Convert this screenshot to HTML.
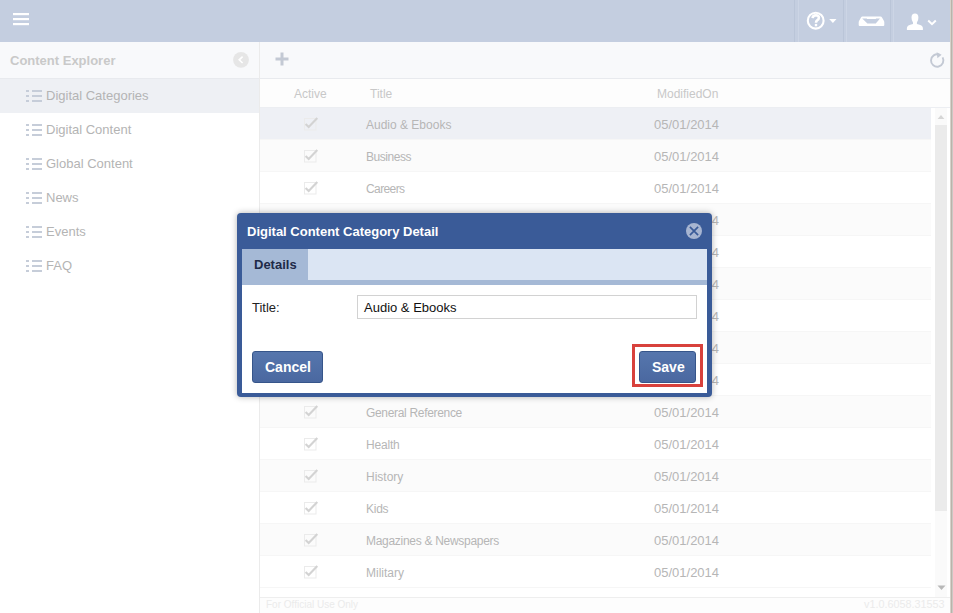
<!DOCTYPE html>
<html><head><meta charset="utf-8">
<style>
*{margin:0;padding:0;box-sizing:border-box}
html,body{width:953px;height:613px;overflow:hidden;background:#fff;font-family:"Liberation Sans",sans-serif;position:relative}
.abs{position:absolute}
#hdr{left:0;top:0;width:953px;height:42px;background:#c4cee0}
.hdiv{top:0;width:1px;height:42px;background:#bac5d8}
.hdiv2{top:0;width:1px;height:42px;background:#ccd5e5}
#side{left:0;top:42px;width:259px;height:571px;background:#fff}
#sidehd{left:0;top:42px;width:259px;height:37px;background:#f8f9fb;border-bottom:1px solid #e8eaee}
#sidehd span{position:absolute;left:10px;top:11px;font-size:13px;font-weight:bold;color:#c9c9c9}
.sitem{left:0;width:259px;height:34px}
.sitem .t{position:absolute;left:46px;top:10px;font-size:13px;color:#b4b4b4}
.sitem svg{position:absolute;left:25px;top:12px}
#sel svg{top:11px}
#sel .t{top:9px}
#vline{left:259px;top:42px;width:1px;height:571px;background:#ebebeb}
#tool{left:260px;top:42px;width:690px;height:37px;background:#f8f9fb;border-bottom:1px solid #e8eaee}
#thead{left:260px;top:79px;width:690px;height:29px;background:#fdfdfd;border-bottom:1px solid #eceef2}
#thead span{position:absolute;top:8px;font-size:12px;color:#c8c8c8}
.row{left:260px;width:671px;height:32px;border-bottom:1px solid #f6f6f6}
.row .c{position:absolute;left:44px;top:9px}
.row .ti{position:absolute;left:106px;top:10px;font-size:12px;color:#b6b6b6}
.row .dt{position:absolute;left:394px;top:9px;font-size:13px;color:#b6b6b6}
#sbar{left:935px;top:108px;width:12px;height:489px;background:#fafafa}
#thumb{left:935px;top:125px;width:12px;height:386px;background:#ebebeb}
#redge{left:950px;top:0;width:3px;height:613px;background:linear-gradient(90deg,#d6d2cb 0,#d6d2cb 1px,#bab3aa 1px,#bab3aa 2px,#ccc8c4 2px)}
#wgap{left:947px;top:108px;width:3px;height:489px;background:#fff}
#foot{left:260px;top:597px;width:690px;height:16px;background:#fdfdfd;border-top:1px solid #eeeeee}
#foot span{position:absolute;top:1px;font-size:10px;color:#ebebeb}
#modal{left:237px;top:213px;width:475px;height:184px;background:#3a5b98;border-radius:4px;box-shadow:0 0 6px rgba(0,0,0,0.3)}
#mtitle{left:10px;top:10.5px;font-size:13px;font-weight:bold;color:#fff}
#tabs{left:5px;top:36px;width:465px;height:36px;background:#dbe5f3;border-bottom:5px solid #a5b9d6}
#tab{left:0;top:0;width:66px;height:31px;background:#a5b9d6}
#tab span{position:absolute;left:12px;top:8px;font-size:13px;font-weight:bold;color:#1e2a48}
#mbody{left:5px;top:72px;width:465px;height:108px;background:#fff}
#lbl{left:10px;top:15px;font-size:13px;color:#222}
#inp{left:115px;top:10px;width:340px;height:24px;border:1px solid #d2d2d2;background:#fff}
#inp span{position:absolute;left:6px;top:4px;font-size:13px;color:#111}
.btn{top:66px;height:32px;border:1px solid #36558a;border-radius:3px;background:linear-gradient(#5676ad,#4a68a0);color:#fff;font-weight:bold;font-size:14px}
.btn span{position:absolute;top:7px}
#red{left:390px;top:59px;width:71px;height:43px;border:3px solid #d8413c}
</style></head><body>
<div id="hdr" class="abs">
  <svg class="abs" style="left:12px;top:12px" width="18" height="14"><rect x="1" y="1" width="16" height="2.2" fill="#fff"/><rect x="1" y="6" width="16" height="2.2" fill="#fff"/><rect x="1" y="11" width="16" height="2.2" fill="#fff"/></svg>
  <div class="abs hdiv" style="left:794px"></div><div class="abs hdiv2" style="left:798px"></div>
  <div class="abs hdiv" style="left:843px"></div><div class="abs hdiv2" style="left:846px"></div>
  <div class="abs hdiv" style="left:890px"></div><div class="abs hdiv2" style="left:893px"></div>
  <svg class="abs" style="left:0;top:0" width="953" height="42">
    <circle cx="815.7" cy="20.7" r="7.9" fill="none" stroke="#fff" stroke-width="2.1"/>
    <path d="M812.6 18.2 Q812.8 15.2 815.9 15.2 Q818.9 15.3 818.9 17.8 Q818.9 19.4 817.1 20.4 Q816 21.1 816 22.8" fill="none" stroke="#fff" stroke-width="2.6"/>
    <rect x="814.8" y="23.9" width="2.4" height="2.4" fill="#fff"/>
    <path d="M829.2 19.1 L836.5 19.1 L832.9 22.9 Z" fill="#fff"/>
    <path d="M861.6 16.6 L880.5 16.6 Q881.5 16.6 882 17.4 L884 21 Q884.3 21.6 884.3 22.5 L884.3 25 Q884.3 26 883.3 26 L859.7 26 Q858.7 26 858.7 25 L858.7 22.5 Q858.7 21.6 859 21 L861 17.4 Q861.5 16.6 862.4 16.6 Z" fill="#fff"/>
    <path d="M862.2 18.6 L880 18.6 L875.8 23.6 L867.4 23.6 Z" fill="#c4cee0"/>
    <rect x="866.9" y="17" width="9" height="2" fill="#fff"/>
    <path d="M915 13.6 Q918.4 13.6 918.4 17.6 Q918.4 21 916.9 22.6 L916.9 24 Q922.9 25 922.9 28 L922.9 29.9 L906.9 29.9 L906.9 28 Q906.9 25 913 24 L913 22.6 Q911.5 21 911.5 17.6 Q911.5 13.6 915 13.6 Z" fill="#fff"/>
    <path d="M928.2 20.6 L932 24.2 L935.8 20.6" fill="none" stroke="#fff" stroke-width="2"/>
  </svg>
</div>
<div id="sidehd" class="abs"><span>Content Explorer</span>
  <svg class="abs" style="left:232px;top:9px" width="18" height="18"><circle cx="9" cy="8.8" r="7.9" fill="#e6e6e6"/><path d="M10.6 5.6 L7.2 8.8 L10.6 12" fill="none" stroke="#fff" stroke-width="1.6"/></svg>
</div>
<div id="sel" class="abs sitem" style="top:79px;height:34px;background:#eef0f4"><svg width="17" height="13"><g fill="#c6cdd9"><rect x="1" y="0" width="3" height="2"/><rect x="1" y="5" width="3" height="2"/><rect x="1" y="10" width="3" height="2"/><rect x="7" y="0" width="10" height="2"/><rect x="7" y="5" width="10" height="2"/><rect x="7" y="10" width="10" height="2"/></g></svg><span class="t">Digital Categories</span></div>
<div class="abs sitem" style="top:112px"><svg width="17" height="13"><g fill="#c6cdd9"><rect x="1" y="0" width="3" height="2"/><rect x="1" y="5" width="3" height="2"/><rect x="1" y="10" width="3" height="2"/><rect x="7" y="0" width="10" height="2"/><rect x="7" y="5" width="10" height="2"/><rect x="7" y="10" width="10" height="2"/></g></svg><span class="t">Digital Content</span></div>
<div class="abs sitem" style="top:146px"><svg width="17" height="13"><g fill="#c6cdd9"><rect x="1" y="0" width="3" height="2"/><rect x="1" y="5" width="3" height="2"/><rect x="1" y="10" width="3" height="2"/><rect x="7" y="0" width="10" height="2"/><rect x="7" y="5" width="10" height="2"/><rect x="7" y="10" width="10" height="2"/></g></svg><span class="t">Global Content</span></div>
<div class="abs sitem" style="top:180px"><svg width="17" height="13"><g fill="#c6cdd9"><rect x="1" y="0" width="3" height="2"/><rect x="1" y="5" width="3" height="2"/><rect x="1" y="10" width="3" height="2"/><rect x="7" y="0" width="10" height="2"/><rect x="7" y="5" width="10" height="2"/><rect x="7" y="10" width="10" height="2"/></g></svg><span class="t">News</span></div>
<div class="abs sitem" style="top:214px"><svg width="17" height="13"><g fill="#c6cdd9"><rect x="1" y="0" width="3" height="2"/><rect x="1" y="5" width="3" height="2"/><rect x="1" y="10" width="3" height="2"/><rect x="7" y="0" width="10" height="2"/><rect x="7" y="5" width="10" height="2"/><rect x="7" y="10" width="10" height="2"/></g></svg><span class="t">Events</span></div>
<div class="abs sitem" style="top:248px"><svg width="17" height="13"><g fill="#c6cdd9"><rect x="1" y="0" width="3" height="2"/><rect x="1" y="5" width="3" height="2"/><rect x="1" y="10" width="3" height="2"/><rect x="7" y="0" width="10" height="2"/><rect x="7" y="5" width="10" height="2"/><rect x="7" y="10" width="10" height="2"/></g></svg><span class="t">FAQ</span></div>
<div id="vline" class="abs"></div>
<div id="tool" class="abs">
  <svg class="abs" style="left:14.5px;top:9.5px" width="14" height="14"><rect x="0.5" y="5.5" width="13" height="3" fill="#c3c9d4"/><rect x="5.5" y="0.5" width="3" height="13" fill="#c3c9d4"/></svg>
  <svg class="abs" style="left:668px;top:8.5px" width="18" height="18"><path d="M11.2 3.6 A6.2 6.2 0 1 0 14.6 6.4" fill="none" stroke="#c3c9d4" stroke-width="1.9"/><path d="M8.6 1.2 L13.6 3.8 L9.4 7.2 Z" fill="#c3c9d4"/></svg>
</div>
<div id="thead" class="abs"><span style="left:34px">Active</span><span style="left:110px">Title</span><span style="left:397px">ModifiedOn</span></div>
<div id="rows"><div class="abs row" style="top:108px;background:#eef0f5"><svg class="c" width="15" height="15"><rect x="0.5" y="1.5" width="11.5" height="11.5" fill="none" stroke="#ebebeb"/><path d="M1.6 6.9 L4.7 9.9 L13.3 1" fill="none" stroke="#d3d3d3" stroke-width="2.1"/></svg><span class="ti">Audio &amp; Ebooks</span><span class="dt">05/01/2014</span></div>
<div class="abs row" style="top:140px;background:#fbfbfb"><svg class="c" width="15" height="15"><rect x="0.5" y="1.5" width="11.5" height="11.5" fill="none" stroke="#ebebeb"/><path d="M1.6 6.9 L4.7 9.9 L13.3 1" fill="none" stroke="#d3d3d3" stroke-width="2.1"/></svg><span class="ti" style="letter-spacing:-0.45px">Business</span><span class="dt">05/01/2014</span></div>
<div class="abs row" style="top:172px;background:#ffffff"><svg class="c" width="15" height="15"><rect x="0.5" y="1.5" width="11.5" height="11.5" fill="none" stroke="#ebebeb"/><path d="M1.6 6.9 L4.7 9.9 L13.3 1" fill="none" stroke="#d3d3d3" stroke-width="2.1"/></svg><span class="ti" style="letter-spacing:-0.6px">Careers</span><span class="dt">05/01/2014</span></div>
<div class="abs row" style="top:204px;background:#fbfbfb"><svg class="c" width="15" height="15"><rect x="0.5" y="1.5" width="11.5" height="11.5" fill="none" stroke="#ebebeb"/><path d="M1.6 6.9 L4.7 9.9 L13.3 1" fill="none" stroke="#d3d3d3" stroke-width="2.1"/></svg><span class="ti">Children</span><span class="dt">05/01/2014</span></div>
<div class="abs row" style="top:236px;background:#ffffff"><svg class="c" width="15" height="15"><rect x="0.5" y="1.5" width="11.5" height="11.5" fill="none" stroke="#ebebeb"/><path d="M1.6 6.9 L4.7 9.9 L13.3 1" fill="none" stroke="#d3d3d3" stroke-width="2.1"/></svg><span class="ti">Computers</span><span class="dt">05/01/2014</span></div>
<div class="abs row" style="top:268px;background:#fbfbfb"><svg class="c" width="15" height="15"><rect x="0.5" y="1.5" width="11.5" height="11.5" fill="none" stroke="#ebebeb"/><path d="M1.6 6.9 L4.7 9.9 L13.3 1" fill="none" stroke="#d3d3d3" stroke-width="2.1"/></svg><span class="ti">Cooking</span><span class="dt">05/01/2014</span></div>
<div class="abs row" style="top:300px;background:#ffffff"><svg class="c" width="15" height="15"><rect x="0.5" y="1.5" width="11.5" height="11.5" fill="none" stroke="#ebebeb"/><path d="M1.6 6.9 L4.7 9.9 L13.3 1" fill="none" stroke="#d3d3d3" stroke-width="2.1"/></svg><span class="ti">Education</span><span class="dt">05/01/2014</span></div>
<div class="abs row" style="top:332px;background:#fbfbfb"><svg class="c" width="15" height="15"><rect x="0.5" y="1.5" width="11.5" height="11.5" fill="none" stroke="#ebebeb"/><path d="M1.6 6.9 L4.7 9.9 L13.3 1" fill="none" stroke="#d3d3d3" stroke-width="2.1"/></svg><span class="ti">Entertainment</span><span class="dt">05/01/2014</span></div>
<div class="abs row" style="top:364px;background:#ffffff"><svg class="c" width="15" height="15"><rect x="0.5" y="1.5" width="11.5" height="11.5" fill="none" stroke="#ebebeb"/><path d="M1.6 6.9 L4.7 9.9 L13.3 1" fill="none" stroke="#d3d3d3" stroke-width="2.1"/></svg><span class="ti">Fiction</span><span class="dt">05/01/2014</span></div>
<div class="abs row" style="top:396px;background:#fbfbfb"><svg class="c" width="15" height="15"><rect x="0.5" y="1.5" width="11.5" height="11.5" fill="none" stroke="#ebebeb"/><path d="M1.6 6.9 L4.7 9.9 L13.3 1" fill="none" stroke="#d3d3d3" stroke-width="2.1"/></svg><span class="ti" style="letter-spacing:-0.32px">General Reference</span><span class="dt">05/01/2014</span></div>
<div class="abs row" style="top:428px;background:#ffffff"><svg class="c" width="15" height="15"><rect x="0.5" y="1.5" width="11.5" height="11.5" fill="none" stroke="#ebebeb"/><path d="M1.6 6.9 L4.7 9.9 L13.3 1" fill="none" stroke="#d3d3d3" stroke-width="2.1"/></svg><span class="ti" style="letter-spacing:-0.2px">Health</span><span class="dt">05/01/2014</span></div>
<div class="abs row" style="top:460px;background:#fbfbfb"><svg class="c" width="15" height="15"><rect x="0.5" y="1.5" width="11.5" height="11.5" fill="none" stroke="#ebebeb"/><path d="M1.6 6.9 L4.7 9.9 L13.3 1" fill="none" stroke="#d3d3d3" stroke-width="2.1"/></svg><span class="ti">History</span><span class="dt">05/01/2014</span></div>
<div class="abs row" style="top:492px;background:#ffffff"><svg class="c" width="15" height="15"><rect x="0.5" y="1.5" width="11.5" height="11.5" fill="none" stroke="#ebebeb"/><path d="M1.6 6.9 L4.7 9.9 L13.3 1" fill="none" stroke="#d3d3d3" stroke-width="2.1"/></svg><span class="ti" style="letter-spacing:-0.25px">Kids</span><span class="dt">05/01/2014</span></div>
<div class="abs row" style="top:524px;background:#fbfbfb"><svg class="c" width="15" height="15"><rect x="0.5" y="1.5" width="11.5" height="11.5" fill="none" stroke="#ebebeb"/><path d="M1.6 6.9 L4.7 9.9 L13.3 1" fill="none" stroke="#d3d3d3" stroke-width="2.1"/></svg><span class="ti" style="letter-spacing:-0.29px">Magazines &amp; Newspapers</span><span class="dt">05/01/2014</span></div>
<div class="abs row" style="top:556px;background:#ffffff"><svg class="c" width="15" height="15"><rect x="0.5" y="1.5" width="11.5" height="11.5" fill="none" stroke="#ebebeb"/><path d="M1.6 6.9 L4.7 9.9 L13.3 1" fill="none" stroke="#d3d3d3" stroke-width="2.1"/></svg><span class="ti">Military</span><span class="dt">05/01/2014</span></div>
<div class="abs row" style="top:588px;background:#ffffff"><svg class="c" width="15" height="15"><rect x="0.5" y="1.5" width="11.5" height="11.5" fill="none" stroke="#ebebeb"/><path d="M1.6 6.9 L4.7 9.9 L13.3 1" fill="none" stroke="#d3d3d3" stroke-width="2.1"/></svg><span class="ti">Music</span><span class="dt">05/01/2014</span></div></div>
<div id="sbar" class="abs"></div>
<div id="thumb" class="abs"></div>
<svg class="abs" style="left:936px;top:113px" width="11" height="8"><path d="M1.6 6 L5 2.1 L8.4 6 Z" fill="#d6d6d6"/></svg>
<svg class="abs" style="left:936px;top:584px" width="11" height="8"><path d="M1.5 1.5 L5.5 6 L9.5 1.5 Z" fill="#b8b8b8"/></svg>
<div id="foot" class="abs"><span style="left:6px">For Official Use Only</span><span style="left:604px;top:0;font-size:10.8px">v1.0.6058.31553</span></div>
<div id="wgap" class="abs"></div><div id="redge" class="abs"></div>
<div id="modal" class="abs">
  <div id="mtitle" class="abs">Digital Content Category Detail</div>
  <svg class="abs" style="left:448px;top:9px" width="18" height="18"><circle cx="9" cy="9" r="8" fill="#a7b5d1"/><path d="M4.9 4.9 L13.1 13.1 M13.1 4.9 L4.9 13.1" stroke="#3a5b98" stroke-width="1.7"/></svg>
  <div id="tabs" class="abs"><div id="tab" class="abs"><span>Details</span></div></div>
  <div id="mbody" class="abs">
    <div id="lbl" class="abs">Title:</div>
    <div id="inp" class="abs"><span>Audio &amp; Ebooks</span></div>
    <div class="abs btn" style="left:10px;width:71px"><span style="left:12px">Cancel</span></div>
    <div id="red" class="abs"></div>
    <div class="abs btn" style="left:397px;width:57px"><span style="left:12px">Save</span></div>
  </div>
</div>
</body></html>
